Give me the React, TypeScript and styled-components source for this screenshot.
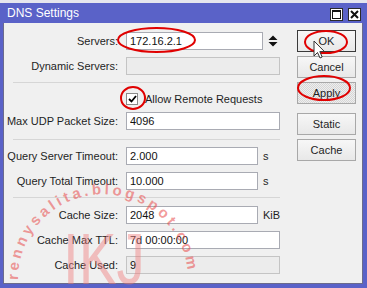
import React from 'react'
import styled, { createGlobalStyle } from 'styled-components'

const GlobalStyle = createGlobalStyle`
  html, body {
    margin: 0;
    padding: 0;
    background: #5a62c8;
  }
  body {
    font-family: 'Liberation Sans', Arial, sans-serif;
  }
`

const Window = styled.div`
  position: relative;
  width: 367px;
  height: 288px;
  box-sizing: border-box;
  background: #5a62c8;
  padding: 0 4px 4px 3px;
  display: flex;
  flex-direction: column;
  overflow: hidden;
`

const TopStrip = styled.div`
  height: 3px;
  margin: 0 -4px 0 -3px;
  background: #e6e6ee;
`

const TitleBar = styled.div`
  height: 20px;
  display: flex;
  align-items: center;
  justify-content: space-between;
  padding: 0 2px 0 4px;
  color: #ffffff;
  font-size: 12px;
`

const TitleButtons = styled.div`
  display: flex;
  gap: 5px;
  padding-top: 2px;
`

const TitleBtn = styled.div`
  width: 13px;
  height: 13px;
  box-sizing: border-box;
  background: #ffffff;
  border: 1px solid #2a2a2a;
  display: flex;
  align-items: center;
  justify-content: center;
`

const Content = styled.div`
  flex: 1;
  display: flex;
  background: #f0f0f0;
  border: 1px solid #6b6b8c;
  border-top: none;
`

const Form = styled.div`
  width: 293px;
  box-sizing: border-box;
  padding: 9px 0 0 2px;
  display: flex;
  flex-direction: column;
  gap: 7px;
`

const Row = styled.div`
  height: 18px;
  display: flex;
  align-items: center;
`

const Label = styled.div`
  width: 112px;
  margin-right: 8px;
  text-align: right;
  font-size: 11px;
  color: #1e1e1e;
  white-space: nowrap;
`

const Field = styled.input<{ $w: number; $off?: boolean }>`
  width: ${(p) => p.$w}px;
  height: 18px;
  box-sizing: border-box;
  margin: 0;
  padding: 0 0 0 3px;
  border: 1px solid ${(p) => (p.$off ? '#c4c4c4' : '#a9abb3')};
  background: ${(p) => (p.$off ? '#ececec' : '#ffffff')};
  font-family: 'Liberation Sans', Arial, sans-serif;
  font-size: 11px;
  color: #111111;
  outline: none;
`

const Unit = styled.span`
  margin-left: 5px;
  font-size: 11px;
  color: #1e1e1e;
`

const Spin = styled.svg`
  margin-left: 5px;
`

const Separator = styled.div<{ $mt?: number; $mb?: number }>`
  height: 1px;
  width: 267px;
  margin: ${(p) => p.$mt || 0}px 0 ${(p) => p.$mb || 0}px 7px;
  background: #d6d6d6;
`

const CheckRow = styled.div`
  height: 12px;
  margin-top: 3px;
  padding-left: 120px;
  display: flex;
  align-items: center;
  font-size: 11px;
  color: #1e1e1e;
`

const CheckBox = styled.div`
  width: 12px;
  height: 12px;
  box-sizing: border-box;
  border: 1px solid #8a8a8a;
  background: #ffffff;
  margin-right: 7px;
  display: flex;
  align-items: center;
  justify-content: center;
`

const ButtonCol = styled.div`
  width: 59px;
  padding-top: 7px;
  display: flex;
  flex-direction: column;
  gap: 4px;
`

const Button = styled.div<{ $kind?: 'default' | 'pressed'; $mt?: number }>`
  height: 22px;
  box-sizing: border-box;
  margin-top: ${(p) => p.$mt || 0}px;
  border: 1px solid ${(p) => (p.$kind === 'default' ? '#3a3a3a' : '#a8a8a8')};
  background: ${(p) =>
    p.$kind === 'pressed'
      ? 'repeating-conic-gradient(#d6d6d6 0 25%, #eeeeee 0 50%) 0 0 / 2px 2px'
      : 'linear-gradient(#f7f7f7, #e8e8e8)'};
  display: flex;
  align-items: center;
  justify-content: center;
  font-size: 11px;
  color: #1e1e1e;
`

const Overlay = styled.svg`
  position: absolute;
  left: 0;
  top: 0;
  pointer-events: none;
`

type F = { label: string; value: string; w: number; off?: boolean; unit?: string; spin?: boolean }

const topFields: F[] = [
  { label: 'Servers:', value: '172.16.2.1', w: 137, spin: true },
  { label: 'Dynamic Servers:', value: '', w: 154, off: true },
]

const timeoutFields: F[] = [
  { label: 'Query Server Timeout:', value: '2.000', w: 132, unit: 's' },
  { label: 'Query Total Timeout:', value: '10.000', w: 132, unit: 's' },
]

const cacheFields: F[] = [
  { label: 'Cache Size:', value: '2048', w: 132, unit: 'KiB' },
  { label: 'Cache Max TTL:', value: '7d 00:00:00', w: 154 },
  { label: 'Cache Used:', value: '9', w: 154, off: true },
]

function FormRow({ f }: { f: F }) {
  return (
    <Row>
      <Label>{f.label}</Label>
      <Field $w={f.w} $off={f.off} readOnly value={f.value} />
      {f.unit && <Unit>{f.unit}</Unit>}
      {f.spin && (
        <Spin width="10" height="12" viewBox="0 0 10 12">
          <path d="M0.5 5 L9.5 5 L5 0.5 Z M0.5 7 L9.5 7 L5 11.5 Z" fill="#111" />
        </Spin>
      )}
    </Row>
  )
}

export default function App() {
  return (
    <>
      <GlobalStyle />
      <Window>
        <TopStrip />
        <TitleBar>
          <span>DNS Settings</span>
          <TitleButtons>
            <TitleBtn>
              <svg width="9" height="9" viewBox="0 0 9 9">
                <rect x="0.5" y="0.5" width="8" height="8" fill="none" stroke="#111" />
                <rect x="0.5" y="0.5" width="8" height="1.5" fill="#111" />
              </svg>
            </TitleBtn>
            <TitleBtn>
              <svg width="9" height="9" viewBox="0 0 9 9">
                <path d="M1 1 L8 8 M8 1 L1 8" stroke="#111" strokeWidth="2" />
              </svg>
            </TitleBtn>
          </TitleButtons>
        </TitleBar>
        <Content>
          <Form>
            {topFields.map((f, i) => (
              <FormRow key={i} f={f} />
            ))}
            <Separator />
            <CheckRow>
              <CheckBox>
                <svg width="9" height="8" viewBox="0 0 9 8">
                  <path d="M1 4 L3.5 6.5 L8 1" fill="none" stroke="#000" strokeWidth="1.8" />
                </svg>
              </CheckBox>
              Allow Remote Requests
            </CheckRow>
            <FormRow f={{ label: 'Max UDP Packet Size:', value: '4096', w: 154 }} />
            <Separator $mt={2} />
            {timeoutFields.map((f, i) => (
              <FormRow key={i} f={f} />
            ))}
            <Separator $mb={1} />
            {cacheFields.map((f, i) => (
              <FormRow key={i} f={f} />
            ))}
          </Form>
          <ButtonCol>
            <Button $kind="default">OK</Button>
            <Button>Cancel</Button>
            <Button $kind="pressed">Apply</Button>
            <Button $mt={5}>Static</Button>
            <Button>Cache</Button>
          </ButtonCol>
        </Content>
        <Overlay width="367" height="288" viewBox="0 0 367 288">
          <defs>
            <path id="wm-arc" d="M18 280 A85 85 0 0 1 188 278.6" />
          </defs>
          <text
            fill="#e84848"
            fillOpacity="0.55"
            fontSize="15"
            fontWeight="bold"
            fontFamily="'Liberation Sans', Arial, sans-serif"
          >
            <textPath href="#wm-arc" textLength="258" lengthAdjust="spacing">
              rennysalita.blogspot.com
            </textPath>
          </text>
          <text
            x="63"
            y="284"
            fontSize="72"
            fontFamily="'Liberation Sans', Arial, sans-serif"
            textLength="82"
            lengthAdjust="spacingAndGlyphs"
            fill="#f07c7c"
            fillOpacity="0.45"
          >
            IKJ
          </text>
          <g fill="none" stroke="#e00000" strokeWidth="2">
            <ellipse cx="156.5" cy="40" rx="38.5" ry="12" />
            <ellipse cx="133" cy="98" rx="12" ry="11" />
            <ellipse cx="326" cy="42" rx="21" ry="11" />
            <ellipse cx="324" cy="88" rx="26" ry="12" />
          </g>
          <path
            d="M314 41 L314 56 L317.5 52.5 L320 58 L322.2 57 L319.8 51.6 L324.5 51.6 Z"
            fill="#ffffff"
            stroke="#333"
            strokeWidth="1"
          />
        </Overlay>
      </Window>
    </>
  )
}
